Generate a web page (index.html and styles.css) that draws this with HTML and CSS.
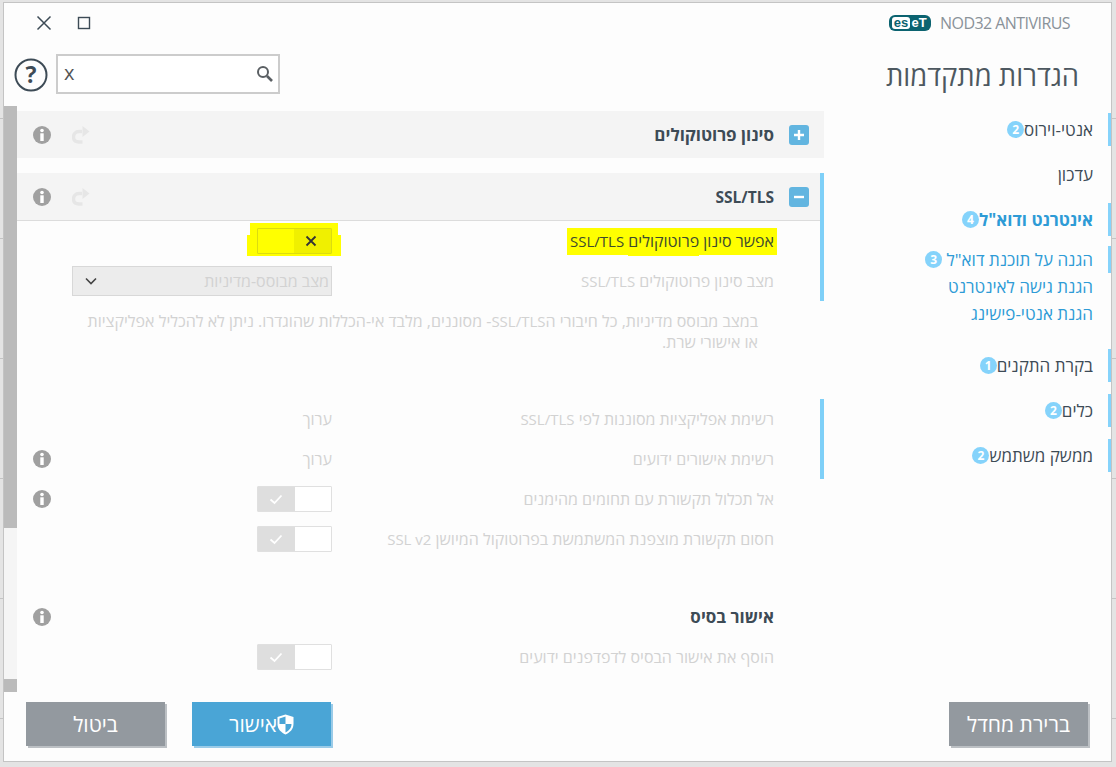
FILE: index.html
```html
<!DOCTYPE html>
<html lang="he">
<head>
<meta charset="utf-8">
<title>ESET NOD32 Antivirus</title>
<link rel="stylesheet" href="styles.css">
</head>
<body>
<div class="window">
  <div class="main">
    <div class="winbar">
      <svg class="win-close" width="16" height="16" viewBox="0 0 16 16"><path d="M1.500 1.500l13 13M14.500 1.500l-13 13" fill="none" stroke="#3d4b56" stroke-width="1.500"/></svg>
      <svg class="win-max" width="14" height="14" viewBox="0 0 14 14"><rect x="1.500" y="1.500" width="11" height="11" fill="none" stroke="#3d4b56" stroke-width="1.400"/></svg>
    </div>
    <div class="searchbar">
      <svg class="help" width="34" height="34" viewBox="0 0 34 34"><circle cx="17" cy="17" r="15.500" fill="none" stroke="#3d4b56" stroke-width="2"/><text x="17" y="25" text-anchor="middle" class="help-q">?</text></svg>
      <div class="search">
        <span class="search-text">x</span>
        <svg width="18" height="18" viewBox="0 0 18 18"><circle cx="7" cy="7" r="5" fill="none" stroke="#5a5f63" stroke-width="2"/><path d="M11 11l5 5" stroke="#5a5f63" stroke-width="2.600"/></svg>
      </div>
    </div>
    <div class="body">
      <div class="scrollbar"><div class="thumb-a"></div><div class="track"></div><div class="thumb-b"></div></div>
      <div class="content" dir="rtl">

        <div class="sec-head plain">
          <span class="toggle-box"><svg width="12" height="12" viewBox="0 0 12 12"><path d="M6 1v10M1 6h10" stroke="#fff" stroke-width="2.400"/></svg></span>
          <span class="sec-title">סינון פרוטוקולים</span>
          <span class="tools"><svg class="redo" width="18" height="18" viewBox="0 0 18 18"><use href="#redo"/></svg><svg width="20" height="20" viewBox="0 0 20 20"><use href="#info"/></svg></span>
        </div>

        <div class="group accent">
          <div class="sec-head ruled">
            <span class="toggle-box"><svg width="12" height="12" viewBox="0 0 12 12"><path d="M1 6h10" stroke="#fff" stroke-width="2.400"/></svg></span>
            <span class="sec-title latin-title">SSL/TLS</span>
            <span class="tools"><svg class="redo" width="18" height="18" viewBox="0 0 18 18"><use href="#redo"/></svg><svg width="20" height="20" viewBox="0 0 20 20"><use href="#info"/></svg></span>
          </div>
          <div class="row">
            <div class="label active"><span class="hl">אפשר סינון <span class="hl-b">פרוטוקולים</span> <span class="en">SSL/TLS</span></span></div>
            <div class="ctl">
              <div class="hl-switch">
                <div class="switch on-off"><span class="sw-cell x"><svg width="12" height="12" viewBox="0 0 12 12"><path d="M1.500 1.500l9 9M10.500 1.500l-9 9" stroke="#333" stroke-width="1.800"/></svg></span><span class="sw-cell"></span></div>
              </div>
            </div>
            <div class="slot"></div>
          </div>
          <div class="row">
            <div class="label">מצב סינון פרוטוקולים <span class="en">SSL/TLS</span></div>
            <div class="ctl">
              <div class="select"><span>מצב מבוסס-מדיניות</span><svg width="12" height="8" viewBox="0 0 12 8"><path d="M1 1.500l5 5 5-5" fill="none" stroke="#444" stroke-width="1.600"/></svg></div>
            </div>
            <div class="slot"></div>
          </div>
        </div>

        <div class="group">
          <p class="desc">במצב מבוסס מדיניות, כל חיבורי ה<span class="en">SSL/TLS</span>- מסוננים, מלבד אי-הכללות שהוגדרו. ניתן לא להכליל אפליקציות או אישורי שרת.</p>
        </div>

        <div class="group accent">
          <div class="row">
            <div class="label">רשימת אפליקציות מסוננות לפי <span class="en">SSL/TLS</span></div>
            <div class="ctl"><span class="edit">ערוך</span></div>
            <div class="slot"></div>
          </div>
          <div class="row">
            <div class="label">רשימת אישורים ידועים</div>
            <div class="ctl"><span class="edit">ערוך</span></div>
            <div class="slot"><svg width="20" height="20" viewBox="0 0 20 20"><use href="#info"/></svg></div>
          </div>
        </div>

        <div class="group">
          <div class="row">
            <div class="label">אל תכלול תקשורת עם תחומים מהימנים</div>
            <div class="ctl"><div class="switch"><span class="sw-cell blank"></span><span class="sw-cell check"><svg width="14" height="11" viewBox="0 0 14 11"><path d="M1.500 5.500l4 3.500 7-7.500" fill="none" stroke="#fff" stroke-width="1.800"/></svg></span></div></div>
            <div class="slot"><svg width="20" height="20" viewBox="0 0 20 20"><use href="#info"/></svg></div>
          </div>
          <div class="row">
            <div class="label">חסום תקשורת מוצפנת המשתמשת בפרוטוקול המיושן <span class="en">SSL v2</span></div>
            <div class="ctl"><div class="switch"><span class="sw-cell blank"></span><span class="sw-cell check"><svg width="14" height="11" viewBox="0 0 14 11"><path d="M1.500 5.500l4 3.500 7-7.500" fill="none" stroke="#fff" stroke-width="1.800"/></svg></span></div></div>
            <div class="slot"></div>
          </div>
          <div class="row subhead">
            <div class="label sub-title">אישור בסיס</div>
            <div class="ctl"></div>
            <div class="slot"><svg width="20" height="20" viewBox="0 0 20 20"><use href="#info"/></svg></div>
          </div>
          <div class="row">
            <div class="label">הוסף את אישור הבסיס לדפדפנים ידועים</div>
            <div class="ctl"><div class="switch"><span class="sw-cell blank"></span><span class="sw-cell check"><svg width="14" height="11" viewBox="0 0 14 11"><path d="M1.500 5.500l4 3.500 7-7.500" fill="none" stroke="#fff" stroke-width="1.800"/></svg></span></div></div>
            <div class="slot"></div>
          </div>
        </div>
      </div>
    </div>
  </div>

  <aside class="side">
    <div class="brand">
      <span class="logo"><span class="logo-es">es</span><span class="logo-et">eT</span></span>
      <span class="product">NOD32 ANTIVIRUS</span>
    </div>
    <div class="side-rtl" dir="rtl">
      <h1 class="title">הגדרות מתקדמות</h1>
      <nav class="nav">
        <a class="item bar">אנטי-וירוס<span class="badge">2</span></a>
        <a class="item">עדכון</a>
        <a class="item bar current">אינטרנט ודוא"ל<span class="badge">4</span></a>
        <a class="subitem bar">הגנה על תוכנת דוא"ל <span class="badge">3</span></a>
        <a class="subitem">הגנת גישה לאינטרנט</a>
        <a class="subitem last">הגנת אנטי-פישינג</a>
        <a class="item bar">בקרת התקנים<span class="badge">1</span></a>
        <a class="item bar">כלים<span class="badge">2</span></a>
        <a class="item bar">ממשק משתמש<span class="badge">2</span></a>
      </nav>
    </div>
  </aside>

  <footer class="footer">
    <div class="foot-left">
      <button class="btn grey">ביטול</button>
      <button class="btn blue">
        <span>אישור</span>
        <svg width="17" height="21" viewBox="0 0 17 21"><path d="M8.500 .5L16.500 3v7c0 5-3.500 8.500-8 10.500C4 18.500 .5 15 .5 10V3z" fill="#fff"/><path d="M8.500 2.500V10H2.500V4.500zM8.500 10H14.500C14.500 14 12 16.800 8.500 18.500z" fill="#4aa5d6"/></svg>
      </button>
    </div>
    <button class="btn grey">ברירת מחדל</button>
  </footer>
</div>

<svg class="defs" width="0" height="0">
  <defs>
    <g id="info"><circle cx="10" cy="10" r="9" fill="#a0a0a0"/><circle cx="10" cy="5.500" r="1.800" fill="#fff"/><rect x="8.300" y="8.300" width="3.400" height="7.700" fill="#fff"/></g>
    <g id="redo"><path d="M10 5.500H7C3.500 5.500 1.500 8 1.500 11S3.500 16 7 16h3.500" fill="none" stroke="#e6e6e6" stroke-width="3.400"/><path d="M10.500 0L17.500 5.500 10.500 11z" fill="#e6e6e6"/></g>
  </defs>
</svg>
</body>
</html>
```
FILE: styles.css
```css
* { box-sizing: border-box; }
html, body { margin: 0; height: 100%; }
body {
  background: repeating-linear-gradient(to bottom, #e4e4e4 0 118px, #c4c4c4 118px 119px, #e4e4e4 119px 120px);
  padding: 2px 4px 5px 3px;
  font-family: "Open Sans", "Noto Sans", "DejaVu Sans", sans-serif;
  color: #3d4b56;
  overflow: hidden;
}
.defs { position: absolute; }

.window {
  height: 760px;
  background: #fdfdfd;
  border: 1px solid #c4c4c4;
  display: grid;
  grid-template-columns: 1fr 286px;
  grid-template-rows: 1fr 69px;
}

/* main column */
.main { display: flex; flex-direction: column; min-height: 0; min-width: 0; }
.winbar { height: 40px; display: flex; align-items: center; padding: 0 0 0 32px; gap: 25px; }
.searchbar { height: 63px; display: flex; align-items: flex-start; padding: 11px 0 0 10px; gap: 8px; }
.help { margin-top: 4px; }
.help-q { font: 700 23px "Open Sans", sans-serif; fill: #3d4b56; }
.search {
  width: 224px; height: 40px;
  border: 2px solid #ccc;
  display: flex; align-items: center; justify-content: space-between;
  padding: 0 4px 0 6px;
  background: #fff;
}
.search-text { font-size: 20px; color: #555; line-height: 1; margin-top: -2px; }

.body { flex: 1; display: flex; min-height: 0; }
.scrollbar { width: 13px; flex: none; display: flex; flex-direction: column; background: #f5f5f5; }
.thumb-a { height: 422px; background: #bbb; }
.track { flex: 1; }
.thumb-b { height: 13px; background: #bbb; }

.content { width: 807px; flex: none; padding-top: 5px; overflow: hidden; }

.group { border-right: 4px solid transparent; }
.group.accent { border-right-color: #7fd0f8; }

.en { font-size: 15px; }

.sec-head {
  height: 47px;
  background: #f4f4f4;
  display: flex; align-items: center;
  padding-right: 15px;
  gap: 15px;
}
.sec-head.plain { margin-bottom: 15px; width: 807px; }
.sec-head.ruled { height: 48px; border-bottom: 1px solid #dcdcdc; padding-right: 11px; }
.toggle-box {
  width: 20px; height: 20px; border-radius: 3px;
  background: #62b5e0;
  display: flex; align-items: center; justify-content: center;
  flex: none;
}
.sec-title { font-size: 17px; font-weight: 700; color: #3d4b56; flex: 1; }
.latin-title { font-size: 15.500px; }
.tools { display: flex; align-items: center; gap: 20px; padding-left: 15px; }

.row {
  height: 40px;
  display: grid;
  grid-template-columns: 1fr 260px 55px;
  align-items: center;
  padding-right: 46px;
}
.label { font-size: 16px; line-height: 20px; color: #d2d2d2; white-space: nowrap; }
.label.active { color: #3d4b2e; margin-top: -1px; }
.sub-title { font-weight: 700; font-size: 17px; color: #3d4b56; }
.subhead { margin-top: 38px; }
.slot { display: flex; align-items: center; padding-right: 20px; }
.ctl { display: flex; align-items: center; }

.hl { background: #ffff00; padding: 2px 3px 3px; margin-right: -3px; }
.hl-b { background: #ffff00; padding: 2px 0 4px; }

.switch {
  width: 75px; height: 26px;
  display: flex; flex-direction: row;
  border: 1px solid #e0e0e0;
  background: #fff;
  border-radius: 1px;
}
.sw-cell { flex: 1; display: flex; align-items: center; justify-content: center; }
.sw-cell.check { background: #dedede; }
.sw-cell.x { flex: none; width: 37px; background: #f0f000; }
.sw-cell.x svg { margin-right: 3px; }
.hl-switch {
  background:
    linear-gradient(#ffff00, #ffff00) center top / calc(100% - 6px) 12px no-repeat,
    linear-gradient(#ffff00, #ffff00) center bottom / 100% 21px no-repeat;
  padding: 5px 9px 2px 10px;
  margin: 0 -9px 3px 0;
}
.on-off { border-color: #dcdc10; background: #ffff00; }

.select {
  width: 260px; height: 30px;
  background: #ececec;
  border: 1px solid #d8d8d8;
  display: flex; align-items: center; justify-content: space-between;
  padding: 0 2px 0 12px;
  font-size: 16px; color: #d2d2d2;
}
.edit { font-size: 16px; color: #d2d2d2; }

.desc {
  margin: 0;
  height: 98px;
  padding: 10px 62px 0 66px;
  font-size: 16px;
  line-height: 21px;
  color: #d2d2d2;
}

/* sidebar */
.side { min-height: 0; display: flex; flex-direction: column; }
.brand { height: 39px; display: flex; align-items: center; padding: 0 0 0 64px; gap: 9px; }
.logo { display: flex; width: 42px; height: 16px; border-radius: 6px; background: #0b6370; padding: 2px 2px 2px 3px; align-items: center; font: 700 13px/12px "Liberation Sans", sans-serif; }
.logo-es { background: #fff; color: #0b6370; border-radius: 3px; width: 18px; height: 12px; text-align: center; line-height: 11px; }
.logo-et { color: #fff; width: 18px; text-align: center; line-height: 11px; }
.product { font-size: 16px; color: #8a9299; letter-spacing: -.55px; white-space: nowrap; }
.title { margin: 14px 32px 0 0; font-size: 27.400px; font-weight: 400; line-height: 40px; color: #4d5860; height: 57px; }
.nav { display: flex; flex-direction: column; }
.item {
  height: 33px; margin-bottom: 12px;
  border-right: 3px solid transparent;
  padding-right: 15px;
  display: flex; align-items: center;
  font-size: 17px; line-height: 22px; color: #3d4b56;
  white-space: pre;
}
.item.bar { border-right-color: #85d3fb; }
.item.current { font-weight: 700; color: #2e9bd6; margin-bottom: 10px; }
.subitem {
  height: 27px;
  border-right: 3px solid transparent;
  padding-right: 15px;
  display: flex; align-items: center;
  font-size: 17px; line-height: 22px; color: #2e9bd6;
  white-space: pre;
}
.subitem.bar { border-right-color: #85d3fb; }
.subitem.last { margin-bottom: 22px; }
.badge {
  width: 17px; height: 17px; border-radius: 50%;
  background: #85d3fb; color: #fff;
  font-size: 12px; font-weight: 700; line-height: 17px;
  text-align: center; flex: none;
}

/* footer */
.footer {
  grid-column: 1 / -1;
  display: flex; justify-content: space-between; align-items: flex-start;
  padding: 10px 23px 0 22px;
}
.foot-left { display: flex; gap: 27px; }
.btn {
  width: 139px; height: 44px;
  border: 0; border-radius: 0;
  color: #fff;
  font: 400 21px "Open Sans", sans-serif;
  display: flex; align-items: center; justify-content: center;
  direction: ltr;
}
.btn.grey { background: #93999f; box-shadow: 2px 2px 0 #bcc0c4; }
.btn.blue { background: #4aa5d6; box-shadow: 2px 2px 0 #9acbe8; }
```
